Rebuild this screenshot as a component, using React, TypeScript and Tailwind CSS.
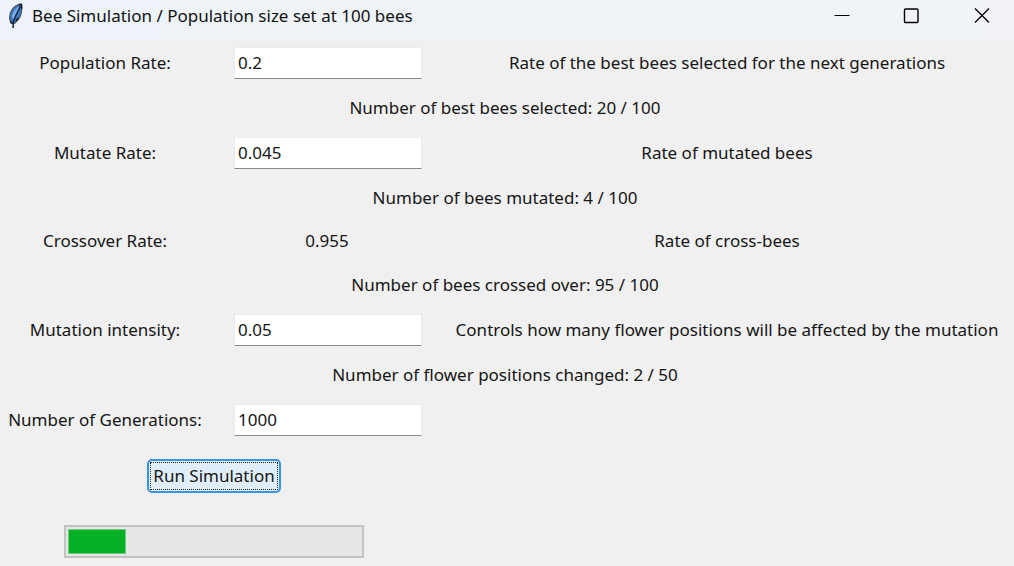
import { useState } from "react";

const COLUMNS = "grid grid-cols-[210fr_234fr_566fr] items-center text-center";

function Feather() {
  return (
    <svg viewBox="0 0 16 26" className="h-[26px] w-4 shrink-0" aria-hidden="true">
      <path d="M13.5 1 C10 1 5 4 3 8.5 C1.5 12 1.500 17 3 20 L7 20 C12 16 14.5 9 13.5 1 Z" fill="#3f7cc6" stroke="#4a5361" strokeWidth="1.3" />
      <path d="M12 3 C8 4.500 5 9 4 14 L5.500 16 C8.500 12 10.500 8 12 3 Z" fill="#7db2ee" />
      <path d="M12.500 3 C10 8 7 13 5.500 19 L5 25" fill="none" stroke="#172238" strokeWidth="1.5" />
      <path d="M8 17.500 L10.500 15 M2.500 18 L4.500 21 M11.500 1.500 L13.500 2 L13.500 6" fill="none" stroke="#10192b" strokeWidth="1.3" />
    </svg>
  );
}

function TitleBar() {
  return (
    <header className="flex h-10 items-start justify-between bg-linear-to-r from-[#edf3f8] to-[#f1f3f8] pl-2">
      <div className="flex h-8 items-center gap-2">
        <Feather />
        <h1 className="text-[17px] leading-6 whitespace-nowrap text-[#111111]">
          Bee Simulation / Population size set at 100 bees
        </h1>
      </div>
      <div className="flex h-8">
        <button type="button" aria-label="Minimize" className="flex w-[60px] items-center justify-center">
          <svg viewBox="0 0 16 16" className="size-4">
            <path d="M0.5 7.5 H15.5" stroke="#000" strokeWidth="1" />
          </svg>
        </button>
        <button type="button" aria-label="Maximize" className="flex w-[78px] items-center justify-center">
          <svg viewBox="0 0 16 16" className="size-4">
            <rect x="1.5" y="1" width="13.5" height="13.5" rx="1" fill="none" stroke="#000" strokeWidth="1.4" />
          </svg>
        </button>
        <button type="button" aria-label="Close" className="flex w-16 items-center justify-center">
          <svg viewBox="0 0 16 16" className="size-4">
            <path d="M1 0.500 L15 14.500 M15 0.500 L1 14.500" stroke="#000" strokeWidth="1.3" />
          </svg>
        </button>
      </div>
    </header>
  );
}

type FieldProps = {
  id: string;
  label: string;
  value: string;
  onChange: (value: string) => void;
  hint?: string;
};

function Field({ id, label, value, onChange, hint }: FieldProps) {
  return (
    <div className={`${COLUMNS} h-[45px]`}>
      <label htmlFor={id} className="whitespace-nowrap">{label}</label>
      <div className="pr-[22px] pl-6">
        <input
          id={id}
          value={value}
          onChange={(e) => onChange(e.target.value)}
          className="block h-8 w-full border border-[#ebebeb] border-b-[#8a8a8a] bg-white px-[3px] outline-none"
        />
      </div>
      {hint && <p className="whitespace-nowrap">{hint}</p>}
    </div>
  );
}

function Summary({ children }: { children: string }) {
  return <p className="flex h-[45px] items-center justify-center">{children}</p>;
}

export default function App() {
  const [population, setPopulation] = useState("0.2");
  const [mutate, setMutate] = useState("0.045");
  const [intensity, setIntensity] = useState("0.05");
  const [generations, setGenerations] = useState("1000");
  const progress = 20;

  return (
    <div className="flex min-h-screen flex-col bg-[#f0f0f0] font-['Noto_Sans','Open_Sans',sans-serif] text-[17px] leading-6 text-[#151515]">
      <TitleBar />
      <main className="pr-1">
        <Field id="population" label="Population Rate:" value={population} onChange={setPopulation} hint="Rate of the best bees selected for the next generations" />
        <Summary>Number of best bees selected: 20 / 100</Summary>
        <Field id="mutate" label="Mutate Rate:" value={mutate} onChange={setMutate} hint="Rate of mutated bees" />
        <Summary>Number of bees mutated: 4 / 100</Summary>
        <div className={`${COLUMNS} h-[42px]`}>
          <span>Crossover Rate:</span>
          <output>0.955</output>
          <p>Rate of cross-bees</p>
        </div>
        <Summary>Number of bees crossed over: 95 / 100</Summary>
        <Field id="intensity" label="Mutation intensity:" value={intensity} onChange={setIntensity} hint="Controls how many flower positions will be affected by the mutation" />
        <Summary>Number of flower positions changed: 2 / 50</Summary>
        <Field id="generations" label="Number of Generations:" value={generations} onChange={setGenerations} />
        <div className={COLUMNS}>
          <div className="col-span-2 flex flex-col items-center gap-8 pt-[17px] pr-4">
            <button type="button" className="h-[34px] rounded-[5px] border-2 border-[#3c93dd] bg-[#e0eef9] p-px">
              <span className="flex h-full items-center border border-dotted border-[#222222] px-0.5 whitespace-nowrap">
                Run Simulation
              </span>
            </button>
            <div
              role="progressbar"
              aria-label="Simulation progress"
              aria-valuenow={progress}
              aria-valuemin={0}
              aria-valuemax={100}
              className="h-[33px] w-[300px] border-2 border-[#c3c3c3] bg-[#e6e6e6] p-0.5"
            >
              <div className="h-full border border-[#6fca80] bg-[#06b025]" style={{ width: `${progress}%` }} />
            </div>
          </div>
        </div>
      </main>
    </div>
  );
}
